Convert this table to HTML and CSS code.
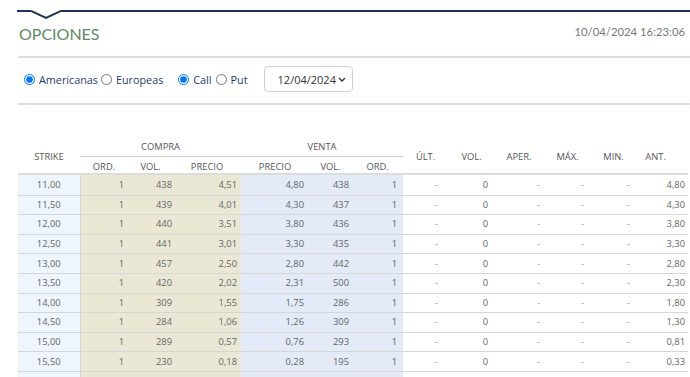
FILE: index.html
```html
<!DOCTYPE html>
<html lang="es">
<head>
<meta charset="utf-8">
<title>Opciones</title>
<link rel="stylesheet" href="styles.css">
</head>
<body>
<div class="page">
  <div class="topline">
    <div class="seg seg-l"></div>
    <svg class="notch" width="30" height="10" viewBox="0 0 30 10"><polyline points="0,1 15,8 30,1" fill="none" stroke="#1d3456" stroke-width="2"/></svg>
    <div class="seg seg-r"></div>
  </div>
  <div class="title-row">
    <h1 class="title">OPCIONES</h1>
    <div class="stamp">10/04/2024 16:23:06</div>
  </div>
  <div class="rule"></div>
  <div class="controls">
    <label class="opt"><input type="radio" name="tipo" checked>Americanas</label>
    <label class="opt opt-near"><input type="radio" name="tipo">Europeas</label>
    <label class="opt opt-far"><input type="radio" name="cp" checked>Call</label>
    <label class="opt opt-near2"><input type="radio" name="cp">Put</label>
    <div class="select">
      <span>12/04/2024</span>
      <svg width="8" height="5" viewBox="0 0 8 5"><polyline points="1,1 4,4 7,1" fill="none" stroke="#333" stroke-width="1.3"/></svg>
    </div>
  </div>
  <div class="rule rule-2"></div>

  <table class="grid">
    <colgroup>
      <col style="width:62px"><col style="width:48px"><col style="width:45px"><col style="width:68px">
      <col style="width:68px"><col style="width:43px"><col style="width:51px">
      <col style="width:45px"><col style="width:47px"><col style="width:48px"><col style="width:49px"><col style="width:43px"><col style="width:53px">
    </colgroup>
    <thead>
      <tr class="h1">
        <th rowspan="2" class="tall">STRIKE</th>
        <th colspan="3" class="grp">COMPRA</th>
        <th colspan="3" class="grp">VENTA</th>
        <th rowspan="2" class="tall">ÚLT.</th>
        <th rowspan="2" class="tall">VOL.</th>
        <th rowspan="2" class="tall">APER.</th>
        <th rowspan="2" class="tall">MÁX.</th>
        <th rowspan="2" class="tall">MIN.</th>
        <th rowspan="2" class="tall ant">ANT.</th>
      </tr>
      <tr class="h2">
        <th>ORD.</th><th>VOL.</th><th>PRECIO</th>
        <th>PRECIO</th><th>VOL.</th><th>ORD.</th>
      </tr>
    </thead>
    <tbody>
      <tr><td>11,00</td><td>1</td><td>438</td><td>4,51</td><td>4,80</td><td>438</td><td>1</td><td class="d">-</td><td>0</td><td class="d">-</td><td class="d">-</td><td class="d">-</td><td>4,80</td></tr>
      <tr><td>11,50</td><td>1</td><td>439</td><td>4,01</td><td>4,30</td><td>437</td><td>1</td><td class="d">-</td><td>0</td><td class="d">-</td><td class="d">-</td><td class="d">-</td><td>4,30</td></tr>
      <tr><td>12,00</td><td>1</td><td>440</td><td>3,51</td><td>3,80</td><td>436</td><td>1</td><td class="d">-</td><td>0</td><td class="d">-</td><td class="d">-</td><td class="d">-</td><td>3,80</td></tr>
      <tr><td>12,50</td><td>1</td><td>441</td><td>3,01</td><td>3,30</td><td>435</td><td>1</td><td class="d">-</td><td>0</td><td class="d">-</td><td class="d">-</td><td class="d">-</td><td>3,30</td></tr>
      <tr><td>13,00</td><td>1</td><td>457</td><td>2,50</td><td>2,80</td><td>442</td><td>1</td><td class="d">-</td><td>0</td><td class="d">-</td><td class="d">-</td><td class="d">-</td><td>2,80</td></tr>
      <tr><td>13,50</td><td>1</td><td>420</td><td>2,02</td><td>2,31</td><td>500</td><td>1</td><td class="d">-</td><td>0</td><td class="d">-</td><td class="d">-</td><td class="d">-</td><td>2,30</td></tr>
      <tr><td>14,00</td><td>1</td><td>309</td><td>1,55</td><td>1,75</td><td>286</td><td>1</td><td class="d">-</td><td>0</td><td class="d">-</td><td class="d">-</td><td class="d">-</td><td>1,80</td></tr>
      <tr><td>14,50</td><td>1</td><td>284</td><td>1,06</td><td>1,26</td><td>309</td><td>1</td><td class="d">-</td><td>0</td><td class="d">-</td><td class="d">-</td><td class="d">-</td><td>1,30</td></tr>
      <tr><td>15,00</td><td>1</td><td>289</td><td>0,57</td><td>0,76</td><td>293</td><td>1</td><td class="d">-</td><td>0</td><td class="d">-</td><td class="d">-</td><td class="d">-</td><td>0,81</td></tr>
      <tr><td>15,50</td><td>1</td><td>230</td><td>0,18</td><td>0,28</td><td>195</td><td>1</td><td class="d">-</td><td>0</td><td class="d">-</td><td class="d">-</td><td class="d">-</td><td>0,33</td></tr>
      <tr class="empty"><td></td><td></td><td></td><td></td><td></td><td></td><td></td><td></td><td></td><td></td><td></td><td></td><td></td></tr>
    </tbody>
  </table>
</div>
</body>
</html>
```

FILE: styles.css
```css
html, body {
  margin: 0;
  padding: 0;
  background: #fff;
  overflow: hidden;
}
body {
  font-family: "Open Sans", "Noto Sans", sans-serif;
  color: #333;
}
.page {
  padding-left: 18px;
}
.topline {
  display: flex;
  align-items: flex-start;
  height: 10px;
  margin-top: 10px;
  margin-left: -1px;
}
.seg {
  height: 2px;
  background: #1d3456;
}
.seg-l { width: 14px; }
.seg-r { flex: 1; }
.notch { display: block; flex: none; }

.title-row {
  display: flex;
  justify-content: space-between;
  align-items: flex-start;
  margin-top: 4px;
  padding-right: 5px;
}
.title {
  margin: 0;
  font-family: "Lato", sans-serif;
  font-weight: 400;
  font-size: 16px;
  line-height: 20px;
  color: #5a8c5e;
  padding-left: 1px;
}
.stamp {
  font-family: "Lato", sans-serif;
  font-size: 11.3px;
  line-height: 14px;
  color: #787878;
  padding-top: 1px;
}
.rule {
  height: 2px;
  background: #d2dfed;
  margin-top: 12px;
}
.rule-2 {
  margin-top: 11px;
}
.controls {
  display: flex;
  align-items: center;
  height: 26px;
  margin-top: 8px;
  padding-left: 6px;
  font-size: 10.8px;
  color: #1f3d6d;
}
.opt {
  display: flex;
  align-items: center;
  gap: 4px;
}
.opt input {
  width: 11px;
  height: 11px;
  margin: 0;
}
.opt-near { margin-left: 3px; }
.opt-far { margin-left: 15px; }
.opt-near2 { margin-left: 4px; }
.select {
  margin-left: 16px;
  width: 89px;
  height: 26px;
  box-sizing: border-box;
  border: 1px solid #cfcfcf;
  border-radius: 4px;
  display: flex;
  align-items: center;
  justify-content: space-between;
  padding: 0 6px 0 13px;
  color: #333;
  font-size: 11px;
}
.select svg { display: block; }

.grid {
  margin-top: 31px;
  width: 670px;
  table-layout: fixed;
  border-collapse: collapse;
  font-size: 9.4px;
}
.grid th {
  font-weight: 400;
  color: #555;
  text-align: center;
  padding: 0;
  line-height: 12px;
}
.grid .h1 th { height: 19px; }
.grid .h1 th.tall { padding-top: 5px; }
.grid .h1 th.grp { border-bottom: 1px solid #cfcfcf; padding-top: 1px; }
.grid .h2 th { height: 12px; padding-top: 4px; vertical-align: top; }
.grid thead { border-bottom: 2px solid #dcdcdc; }
.grid th.ant { padding-right: 12px; }

.grid td {
  height: 18.6px;
  padding: 0;
  line-height: 12px;
  color: #666;
  text-align: right;
  border-top: 1px solid #d6d6d6;
}
.grid tbody tr:first-child td { border-top: 0; height: 19.6px; }
.grid td.d { color: #999; }
.grid td:nth-child(1) { text-align: center; background: #eef5fc; }
.grid td:nth-child(2) { padding-right: 4px; background: #eae8d5; border-left: 1px solid #d6d6d6; }
.grid td:nth-child(3) { padding-right: 1px; background: #eae8d5; }
.grid td:nth-child(4) { padding-right: 4px; background: #eae8d5; }
.grid td:nth-child(5) { padding-right: 5px; background: #e3eaf8; }
.grid td:nth-child(6) { padding-right: 3px; background: #e3eaf8; }
.grid td:nth-child(7) { padding-right: 6px; background: #e3eaf8; }
.grid td:nth-child(8) { padding-right: 10px; }
.grid td:nth-child(9) { padding-right: 7px; }
.grid td:nth-child(10) { padding-right: 3px; }
.grid td:nth-child(11) { padding-right: 8px; }
.grid td:nth-child(12) { padding-right: 5px; }
.grid td:nth-child(13) { padding-right: 3px; }
.grid tr.empty td { height: 30px; }
```
